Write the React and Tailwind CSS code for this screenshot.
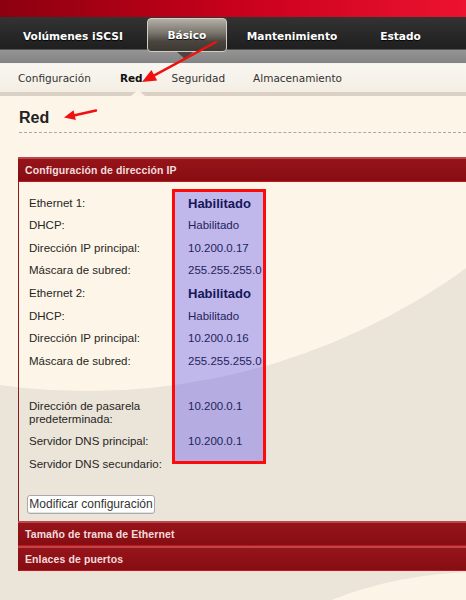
import React from 'react'

const rows = [
  { label: 'Ethernet 1:', value: 'Habilitado', bold: true },
  { label: 'DHCP:', value: 'Habilitado' },
  { label: 'Dirección IP principal:', value: '10.200.0.17' },
  { label: 'Máscara de subred:', value: '255.255.255.0' },
  { label: 'Ethernet 2:', value: 'Habilitado', bold: true },
  { label: 'DHCP:', value: 'Habilitado' },
  { label: 'Dirección IP principal:', value: '10.200.0.16' },
  { label: 'Máscara de subred:', value: '255.255.255.0' },
]

function SectionHeader({ title }) {
  return (
    <div className="h-[25px] flex items-center pl-[7px] pt-[2px] border-t-2 border-t-[#b9474b] border-b border-b-[#c3161c] bg-gradient-to-b from-[#96141a] to-[#870d13]">
      <span className="font-['Liberation_Sans',Arial,sans-serif] font-bold text-[10.5px] text-[#f3dcdc] tracking-[0.1px]">{title}</span>
    </div>
  )
}

export default function App() {
  return (
    <div className="relative w-[466px] h-[600px] overflow-hidden bg-[#ebe4d8]">
      {/* background shapes */}
      <div className="absolute left-[-560px] top-[-903px] w-[1294px] h-[1294px] rounded-full bg-[#fdf6e8]" />
      <div className="absolute left-[72px] top-[572px] w-[816px] h-[816px] rounded-full bg-[#fcf5e7]" />

      <div className="relative">
        {/* top red strip */}
        <div className="h-[17px] bg-gradient-to-r from-[#8c000f] via-[#c8001b] to-[#ec1230]" />

        {/* main nav */}
        <div className="h-[32px] flex items-start bg-gradient-to-b from-[#333333] to-[#1f1f1f] font-['DejaVu_Sans',Verdana,sans-serif] font-bold text-[10.6px] text-white [text-shadow:0_1px_1px_rgba(0,0,0,0.9)]">
          <span className="ml-[23px] mt-[12px]">Volúmenes iSCSI</span>
          <div className="relative z-10 ml-[24px] mt-[1px] w-[80px] h-[34px] rounded-[4px] border border-[#d2cec6] bg-[linear-gradient(#b4b0a8,#77736b_45%,#4a463f_70%,#3c3832)] flex items-center justify-center">
            <span className="mt-[1px]">Básico</span>
            <div className="absolute left-[29px] top-[33px] w-0 h-0 border-l-[8px] border-r-[8px] border-t-[7px] border-l-transparent border-r-transparent border-t-[#4a463f]" />
          </div>
          <span className="ml-[20px] mt-[12px]">Mantenimiento</span>
          <span className="ml-[43px] mt-[12px]">Estado</span>
        </div>

        {/* gray strip */}
        <div className="h-[15px] bg-gradient-to-b from-[#959595] to-[#838383] border-b border-b-[#f4f0ea] border-t border-t-[#555]" />

        {/* sub nav */}
        <div className="relative h-[28px] pt-[2px] bg-gradient-to-b from-[#f9f6f1] to-[#f4eee4] flex items-center font-['DejaVu_Sans',Verdana,sans-serif] text-[10.5px] text-[#333]">
          <span className="ml-[18px]">Configuración</span>
          <span className="ml-[29px] font-bold text-[#111]">Red</span>
          <span className="ml-[29px]">Seguridad</span>
          <span className="ml-[28px]">Almacenamiento</span>
        </div>
        <div className="relative h-[4px] bg-[#dad1c4]">
          <div className="absolute left-[131px] bottom-0 w-0 h-0 border-l-[7px] border-r-[7px] border-b-[6px] border-l-transparent border-r-transparent border-b-[#fbf4e6]" />
        </div>

        {/* content */}
        <div className="pl-[18px]">
          <h1 className="pl-px pt-[12px] leading-[19px] font-['Liberation_Sans',Arial,sans-serif] font-bold text-[16px] text-[#222]">Red</h1>
          <div className="mt-[5px] ml-px border-b border-dashed border-[#a9a9a9]" />

          <div className="mt-[24px] w-[470px]">
            <SectionHeader title="Configuración de dirección IP" />
            <div className="relative isolate border-l border-l-[#8d1c1c] pb-[7px] font-['Liberation_Sans',Arial,sans-serif] text-[11.5px] text-[#262626]">
              {/* highlight annotation */}
              <div className="absolute -z-10 left-[153px] top-[7px] w-[94px] h-[275px] border-[3px] border-[#ff0a0a] bg-[rgba(100,90,240,0.4)]" />

              <div className="pt-[10px] pl-[10px]">
                {rows.map((row, i) => (
                  <div key={i} className="grid grid-cols-[159px_1fr] items-center h-[22.6px]">
                    <span>{row.label}</span>
                    {row.bold ? (
                      <span className="font-bold text-[13px] text-[#16165a]">{row.value}</span>
                    ) : (
                      <span className="text-[#1f1f5c]">{row.value}</span>
                    )}
                  </div>
                ))}
                <div className="h-[22.6px]" />
                <div className="grid grid-cols-[159px_1fr] items-start h-[35px] pt-[4.5px] leading-[13px]">
                  <span>Dirección de pasarela<br />predeterminada:</span>
                  <span className="text-[#1f1f5c]">10.200.0.1</span>
                </div>
                <div className="grid grid-cols-[159px_1fr] items-center h-[22.6px]">
                  <span>Servidor DNS principal:</span>
                  <span className="text-[#1f1f5c]">10.200.0.1</span>
                </div>
                <div className="grid grid-cols-[159px_1fr] items-center h-[22.6px]">
                  <span>Servidor DNS secundario:</span>
                  <span />
                </div>
              </div>

              <div className="mt-[19px] pl-[8px]">
                <button className="h-[19px] w-[128px] rounded-[3px] border border-[#a9a9a9] bg-white text-[12px] leading-none text-[#333] shadow-[inset_0_-1px_0_#e4e4e4]">
                  Modificar configuración
                </button>
              </div>
            </div>
            <SectionHeader title="Tamaño de trama de Ethernet" />
            <SectionHeader title="Enlaces de puertos" />
          </div>
        </div>
      </div>

      {/* red annotation arrows */}
      <svg className="absolute inset-0 pointer-events-none z-20" width="466" height="600" viewBox="0 0 466 600">
        <line x1="216" y1="42" x2="154.3" y2="75.3" stroke="#f01010" strokeWidth="2.5" strokeLinecap="round" />
        <polygon points="142,82 157.2,80.6 151.4,70" fill="#f01010" />
        <line x1="96" y1="110.5" x2="74.7" y2="115.2" stroke="#f01010" strokeWidth="2.5" strokeLinecap="round" />
        <polygon points="64,117.5 75.8,120.1 73.6,110.3" fill="#f01010" />
      </svg>
    </div>
  )
}
